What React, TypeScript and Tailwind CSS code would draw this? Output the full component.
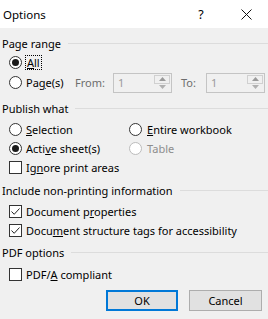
import React from "react";

const font = { fontFamily: '"Noto Sans", "Segoe UI", sans-serif' };

function Radio({ checked, disabled }: { checked?: boolean; disabled?: boolean }) {
  return (
    <span
      className={`flex h-[13px] w-[13px] shrink-0 items-center justify-center rounded-full border bg-white ${
        disabled ? "border-[#bcbcbc]" : "border-[#333333]"
      }`}
    >
      {checked && <span className="h-[7px] w-[7px] rounded-full bg-[#1a1a1a]" />}
    </span>
  );
}

function Check({ checked }: { checked?: boolean }) {
  return (
    <span className="flex h-[13px] w-[13px] shrink-0 items-center justify-center border border-[#333333] bg-white">
      {checked && (
        <svg width="11" height="11" viewBox="0 0 11 11">
          <path d="M1.5 5.5 L4.2 8.3 L9.5 2.5" fill="none" stroke="#222" strokeWidth="1" />
        </svg>
      )}
    </span>
  );
}

function Group({ title, className = "" }: { title: string; className?: string }) {
  return (
    <div className={`flex h-[20px] items-center pl-[2px] ${className}`}>
      <span>{title}</span>
      <span className="ml-[7px] h-px flex-1 bg-[#dcdcdc]" />
    </div>
  );
}

function Spin() {
  return (
    <div className="flex h-[20px] w-[59px] items-center justify-between border border-[#c4c4c4] bg-[#f0f0f0] pl-[4px] pr-[1px]">
      <span className="text-[#9a9a9a]">1</span>
      <span className="flex h-[16px] w-[16px] flex-col">
        <span className="flex flex-1 items-center justify-center border border-[#d0d0d0]">
          <svg width="7" height="4" viewBox="0 0 7 4"><path d="M0 4 L3.5 0 L7 4 Z" fill="#9a9a9a" /></svg>
        </span>
        <span className="flex flex-1 items-center justify-center">
          <svg width="7" height="4" viewBox="0 0 7 4"><path d="M0 0 L3.5 4 L7 0 Z" fill="#b0b0b0" /></svg>
        </span>
      </span>
    </div>
  );
}

export default function App() {
  return (
    <div className="flex h-[319px] w-[268px] flex-col overflow-hidden bg-[#f0f0f0] text-[11px] leading-[15px] text-black" style={font}>
      {/* Title bar */}
      <div className="flex h-[28px] shrink-0 items-center bg-white pl-[3px] text-[11.5px]">
        <span className="flex-1">Options</span>
        <span className="w-[20px] text-center text-[12.5px]">?</span>
        <svg className="ml-[30px] mr-[16px]" width="11" height="11" viewBox="0 0 11 11">
          <path d="M0.5 0.5 L10.5 10.5 M10.5 0.5 L0.5 10.5" stroke="#111" strokeWidth="1" />
        </svg>
      </div>

      {/* Page range */}
      <Group title="Page range" className="mt-[5px]" />
      <div className="flex h-[19px] items-center gap-[3px] pl-[9px]">
        <Radio checked />
        <span className="border border-dotted border-black px-[1px] leading-[13px]">
          <u>A</u>ll
        </span>
      </div>
      <div className="flex h-[21px] items-center pl-[9px]">
        <Radio />
        <span className="ml-[4px] w-[49px]">
          Pa<u>g</u>e(s)
        </span>
        <span className="w-[38px] text-[#6d6d6d]">From:</span>
        <Spin />
        <span className="ml-[9px] w-[25px] text-[#6d6d6d]">To:</span>
        <Spin />
      </div>

      {/* Publish what */}
      <Group title="Publish what" className="mt-[5px]" />
      <div className="mt-[2px] grid grid-cols-[120px_1fr] pl-[9px]">
        <div className="flex h-[19px] items-center gap-[4px]">
          <Radio />
          <span><u>S</u>election</span>
        </div>
        <div className="flex h-[19px] items-center gap-[5px]">
          <Radio />
          <span><u>E</u>ntire workbook</span>
        </div>
        <div className="flex h-[19px] items-center gap-[4px]">
          <Radio checked />
          <span>Acti<u>v</u>e sheet(s)</span>
        </div>
        <div className="flex h-[19px] items-center gap-[5px]">
          <Radio disabled />
          <span className="text-[#8d8d8d]">Table</span>
        </div>
        <div className="col-span-2 flex h-[19px] items-center gap-[4px]">
          <Check />
          <span>Ig<u>n</u>ore print areas</span>
        </div>
      </div>

      {/* Include non-printing information */}
      <Group title="Include non-printing information" className="mt-[3px]" />
      <div className="mt-[1px] flex h-[20px] items-center gap-[4px] pl-[9px]">
        <Check checked />
        <span>Document p<u>r</u>operties</span>
      </div>
      <div className="flex h-[19px] items-center gap-[4px] pl-[9px]">
        <Check checked />
        <span>Docu<u>m</u>ent structure tags for accessibility</span>
      </div>

      {/* PDF options */}
      <Group title="PDF options" className="mt-[2px]" />
      <div className="mt-[1px] flex h-[22px] items-center gap-[4px] pl-[9px]">
        <Check />
        <span>PDF/<u>A</u> compliant</span>
      </div>

      {/* Buttons */}
      <div className="mt-[5px] flex justify-end gap-[11px] pr-[6px]">
        <button className="h-[21px] w-[72px] border-2 border-[#0078d7] bg-[#e1e1e1]">OK</button>
        <button className="h-[21px] w-[73px] border border-[#adadad] bg-[#e1e1e1]">Cancel</button>
      </div>
    </div>
  );
}
